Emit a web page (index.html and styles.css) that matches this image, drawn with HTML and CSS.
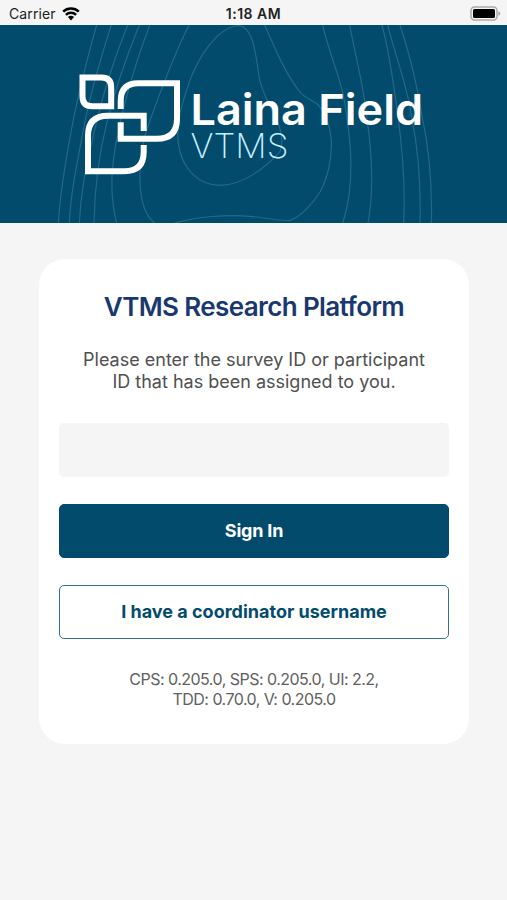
FILE: index.html
```html
<!DOCTYPE html>
<html lang="en">
<head>
    <meta charset="utf-8">
    <title>VTMS Research Platform</title>
    <link rel="stylesheet" href="styles.css">
</head>
<body>
<div class="status-bar">
    <div class="carrier">
        <span>Carrier</span>
        <svg class="wifi" viewBox="0 0 18 14">
            <path d="M1.2 4.7a11.3 11.3 0 0 1 15.6 0M3.9 7.9a7.4 7.4 0 0 1 10.2 0"/>
            <path class="dot" d="M5.9 10.1a4.6 4.6 0 0 1 6.2 0L9 13.4z"/>
        </svg>
    </div>
    <div class="time">1:18 AM</div>
    <svg class="battery" viewBox="0 0 31 15">
        <rect class="shell" x="1" y="1" width="26" height="13" rx="3.5"/>
        <rect x="3" y="3" width="22" height="9" rx="1.5"/>
        <path class="cap" d="M28.3 5.2v4.6q2-.6 2-2.3t-2-2.3z"/>
    </svg>
</div>
<div class="banner">
    <svg viewBox="0 75 1521 594">
        <g class="contours">
            <path d="M290 75C255 200 235 280 218 370S180 570 175 670"/>
            <path d="M334 75C300 180 270 285 250 390S212 580 208 670"/>
            <path d="M383 75C345 170 312 265 285 385S242 570 238 670"/>
            <path d="M418 75C375 180 345 270 320 370S284 560 282 670"/>
            <path d="M449 75C410 180 380 280 360 370S322 560 350 670"/>
            <path d="M567 75C515 180 475 290 440 390C415 470 403 625 465 670"/>
            <path d="M705 78C650 90 600 165 572 235C545 310 528 370 535 430C545 510 600 556 660 556C730 556 800 500 840 455C850 430 845 390 830 360C810 315 785 280 776 225C767 150 755 65 705 78z"/>
            <path d="M522 670C590 650 680 642 759 650C800 654 840 664 870 661C900 652 935 615 960 576C980 540 997 480 994 420C990 375 977 340 955 315C935 298 915 295 900 276C855 220 825 145 794 75"/>
            <path d="M968 75C985 150 1015 220 1030 285C1050 400 1070 540 1028 670"/>
            <path d="M1049 75C1065 165 1090 250 1100 350C1115 450 1122 570 1104 670"/>
            <path d="M1146 75C1170 165 1180 250 1192 335C1208 450 1216 570 1211 670"/>
            <path d="M1163 75C1185 165 1220 250 1235 350C1255 450 1263 560 1260 670"/>
            <path d="M1200 75C1230 165 1250 250 1265 340C1288 450 1297 560 1294 670"/>
        </g>
        <g class="logo" transform="scale(3)">
            <path d="M82.5 77.5h19q9.7 0 9.7 9.7v19h-19q-9.7 0-9.7-9.7z"/>
            <path d="M120.7 109v-8q0-17.7 17.5-17.7H177v35.4q0 20-20 20h-36.3v-16.4"/>
            <path d="M143.7 131v-15.3H108q-20 0-20 20v35.6h36.5q19.2 0 19.2-19.2v-7"/>
        </g>
        <g transform="scale(3)">
            <text class="brand" x="190.5" y="124.5" textLength="232.5" lengthAdjust="spacingAndGlyphs">Laina Field</text>
            <text class="product" x="190.5" y="157.7" textLength="98" lengthAdjust="spacingAndGlyphs">VTMS</text>
        </g>
    </svg>
</div>
<div class="card">
    <h1>VTMS Research Platform</h1>
    <p class="intro">Please enter the survey ID or participant<br>ID that has been assigned to you.</p>
    <input class="field" type="text" aria-label="Survey or participant ID">
    <button class="btn primary">Sign In</button>
    <button class="btn outline">I have a coordinator username</button>
    <p class="versions">CPS: 0.205.0, SPS: 0.205.0, UI: 2.2,<br>TDD: 0.70.0, V: 0.205.0</p>
</div>
</body>
</html>
```
FILE: styles.css
```css
* {
    box-sizing: border-box;
}

body {
    margin: 0;
    height: 900px;
    background: #f5f5f5;
    font-family: Inter, "Open Sans", sans-serif;
}

.status-bar {
    display: grid;
    grid-template-columns: 1fr auto 1fr;
    align-items: center;
    height: 25px;
    padding: 2px 6px 0 9px;
    color: #222;
    font-size: 14px;
}

.carrier {
    display: flex;
    align-items: center;
    gap: 6px;
    letter-spacing: 0.1px;
}

.wifi {
    width: 18px;
    height: 14px;
    fill: none;
    stroke: #000;
    stroke-width: 2.5;
}

.wifi .dot {
    fill: #000;
    stroke: none;
}

.time {
    margin-right: 3px;
    font-weight: 600;
    letter-spacing: 0.5px;
}

.battery {
    justify-self: end;
    width: 31px;
    height: 15px;
}

.battery .shell {
    fill: #f5f5f5;
    stroke: #aaa;
    stroke-width: 1.5;
}

.battery .cap {
    fill: #aaa;
}

.banner {
    height: 198px;
    background: #024b6d;
}

.banner svg {
    display: block;
    width: 507px;
    height: 198px;
}

.contours {
    fill: none;
    stroke: #226b88;
    stroke-width: 3.5;
}

.logo {
    fill: none;
    stroke: #fff;
    stroke-width: 6;
}

.brand {
    fill: #fff;
    font-size: 43px;
    font-weight: 600;
}

.product {
    fill: #c9f0ff;
    font-size: 34px;
    font-weight: 200;
}

.card {
    display: flex;
    flex-direction: column;
    width: 430px;
    height: 485px;
    margin: 36px 0 0 39px;
    padding: 32px 20px 0;
    background: #fff;
    border-radius: 26px;
    text-align: center;
}

h1 {
    margin: 0;
    color: #18386f;
    font-size: 26px;
    font-weight: 600;
    line-height: 32px;
    letter-spacing: -0.62px;
}

.intro {
    margin: 26px 0 30px;
    color: #505050;
    font-size: 18px;
    line-height: 22px;
    white-space: nowrap;
}

.field {
    height: 54px;
    margin-bottom: 27px;
    padding: 0 16px;
    border: 0;
    border-radius: 5px;
    background: #f5f5f5;
    font: inherit;
}

.btn {
    height: 54px;
    margin-bottom: 27px;
    padding-bottom: 3px;
    border: 1.5px solid #024b6d;
    border-radius: 5px;
    font: 700 18px Inter, "Open Sans", sans-serif;
}

.primary {
    background: #024b6d;
    color: #fff;
    letter-spacing: -0.2px;
}

.outline {
    background: #fff;
    border-color: #39718c;
    color: #024b6d;
}

.versions {
    margin: 4px 0 0;
    color: #606060;
    font-size: 16px;
    line-height: 19.5px;
    letter-spacing: -0.52px;
}
```
